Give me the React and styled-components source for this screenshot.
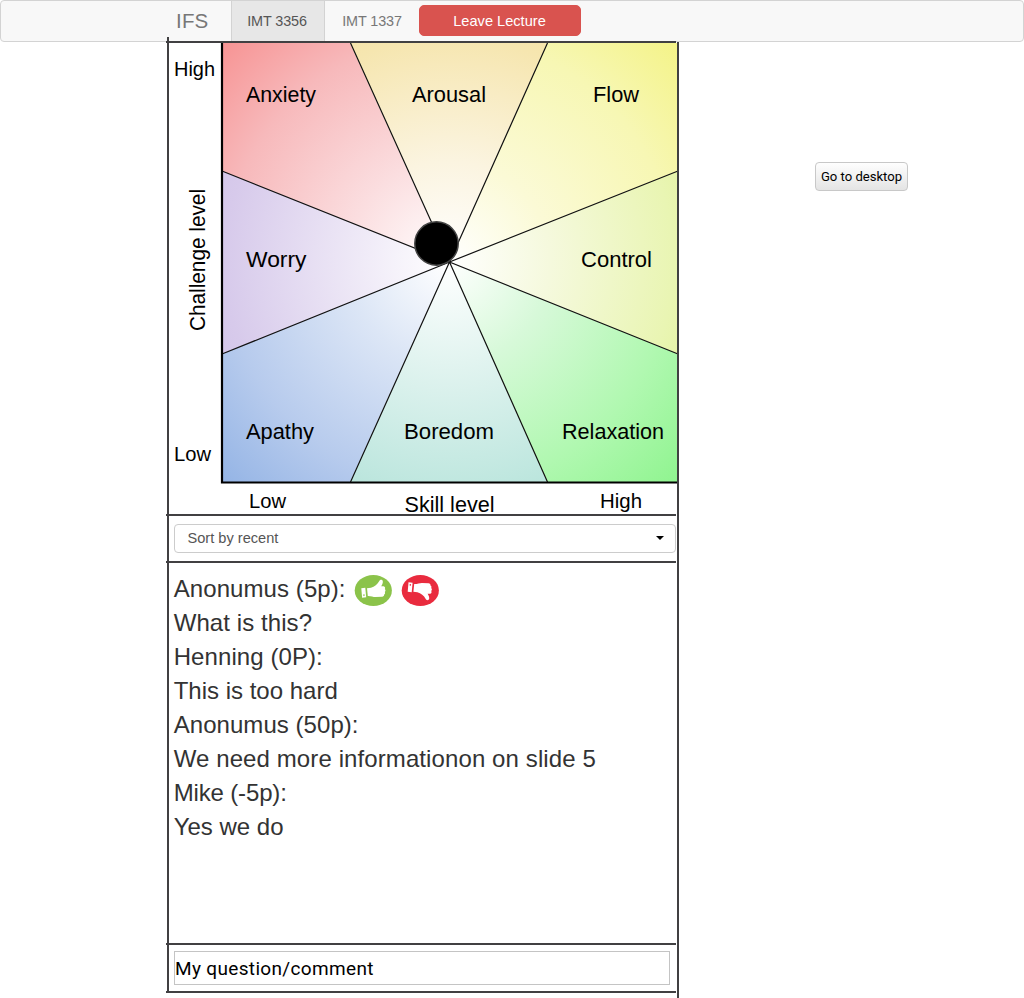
import React from "react";
import styled, { createGlobalStyle } from "styled-components";

const Global = createGlobalStyle`
  * { box-sizing: border-box; }
  body {
    margin: 0;
    background: #fff;
    color: #333;
    font-family: "Liberation Sans", Arial, sans-serif;
    overflow: hidden;
  }
`;

const ink = "#414042";

const Page = styled.div`
  height: 998px;
  overflow: hidden;
`;

const Navbar = styled.nav`
  display: flex;
  height: 42px;
  padding-left: 175px;
  background: #f8f8f8;
  border: 1px solid #d3d3d3;
  border-radius: 4px;
`;

const Brand = styled.a`
  width: 55px;
  font-size: 20.5px;
  line-height: 39px;
  letter-spacing: 0.2px;
  color: #777;
`;

const NavItem = styled.a`
  width: ${(p) => p.$width}px;
  padding-right: ${(p) => (p.$active ? 2 : 0)}px;
  text-align: center;
  font-size: 14.4px;
  line-height: 40px;
  letter-spacing: -0.1px;
  color: ${(p) => (p.$active ? "#555" : "#777")};
  background: ${(p) => (p.$active ? "#e7e7e7" : "transparent")};
  border: solid ${(p) => (p.$active ? "#d3d3d3" : "transparent")};
  border-width: 0 1px;
`;

const LeaveButton = styled.button`
  width: 162px;
  height: 31px;
  margin: 4px 0 0;
  padding: 0 1px 0 0;
  border: 1px solid #d9534f;
  border-radius: 5px;
  background: #d9534f;
  color: #fff;
  font: 14.6px "Liberation Sans", Arial, sans-serif;
`;

const Main = styled.main`
  display: flex;
  align-items: flex-start;
  margin-top: -1px;
`;

const Board = styled.div`
  position: relative;
  width: 513px;
  height: 957px;
  margin-left: 166px;
  &::before, &::after {
    content: "";
    position: absolute;
    width: 2px;
    background: ${ink};
  }
  &::before { left: 1px; top: -4px; height: 955px; }
  &::after { right: 0; top: 1px; bottom: 0; }
`;

const Section = styled.section`
  width: 510px;
  height: ${(p) => p.$height}px;
  padding: ${(p) => p.$padding || "0"};
  border-top: 2px solid ${ink};
`;

const Diagram = styled.svg`
  display: block;
  width: 509px;
  height: 471px;
  margin-left: 3px;
  overflow: visible;
  font-family: "Liberation Sans", Arial, sans-serif;
`;

const SortSelect = styled.div`
  display: flex;
  align-items: center;
  justify-content: space-between;
  width: 502px;
  height: 29px;
  padding: 0 11px 2px 12.5px;
  border: 1px solid #ccc;
  border-radius: 4px;
  font-size: 14.6px;
  color: #555;
`;

const Caret = styled.i`
  border: solid transparent;
  border-width: 4px 4px 0;
  border-top-color: #000;
`;

const Line = styled.div`
  display: flex;
  align-items: center;
  height: 34px;
  font-size: 24px;
  letter-spacing: ${(p) => p.$tracking ?? 0.08}px;
  white-space: nowrap;
`;

const Vote = styled.svg`
  width: 38px;
  height: 31px;
  margin-left: ${(p) => (p.$down ? 9 : 8.7)}px;
  margin-top: 2px;
`;

const Question = styled.input`
  display: block;
  width: 496px;
  height: 34px;
  padding: 0;
  border: 1px solid #c4c4c4;
  background: #fff;
  color: #000;
  font: 19px Roboto, sans-serif;
  letter-spacing: 0.34px;
  outline: none;
`;

const DesktopButton = styled.button`
  width: 93px;
  height: 29px;
  margin: 121px 0 0 136px;
  padding: 0;
  border: 1px solid #c8c8c8;
  border-radius: 4px;
  background: linear-gradient(#fefefe, #e4e4e4);
  color: #000;
  font: 13.1px Roboto, sans-serif;
  white-space: nowrap;
`;

const wedges = [
  { id: "anxiety", points: "449,262 350,43 222,43 222,171", stops: ["#fbdee0", "#f7b9bb", "#f79393"] },
  { id: "arousal", points: "449,262 350,43 547,43", stops: ["#fbf4e0", "#f6e6b0", "#f4df98"] },
  { id: "flow", points: "449,262 547,43 678,43 678,171", stops: ["#fbfad6", "#f7f7b4", "#f4f388"] },
  { id: "control", points: "449,262 678,171 678,354", stops: ["#f5f9dd", "#e9f5b3", "#def08c"] },
  { id: "relaxation", points: "449,262 678,354 678,482 547,482", stops: ["#d7f9d9", "#b0f8b0", "#90f490"] },
  { id: "boredom", points: "449,262 547,482 350,482", stops: ["#e2f4f0", "#bfe7df", "#a4dbd0"] },
  { id: "apathy", points: "449,262 350,482 222,482 222,354", stops: ["#dce6f6", "#b7cbed", "#94b4e5"] },
  { id: "worry", points: "449,262 222,354 222,171", stops: ["#ede7f6", "#d7caeb", "#cbbce6"] },
];

const labels = [
  ["Anxiety", 246, 101.5, 70, 22],
  ["Arousal", 412, 101.5, 74, 22],
  ["Flow", 593, 101.5, 46, 22],
  ["Worry", 246, 267, 60.5, 22],
  ["Control", 581, 267, 71, 22],
  ["Apathy", 246, 439, 68, 22],
  ["Boredom", 404, 439, 90, 22],
  ["Relaxation", 562, 439, 102, 22],
  ["Skill level", 404.5, 512, 90, 22],
  ["High", 174, 75.5, 41, 19.5],
  ["Low", 174, 461, 37, 19.5],
  ["Low", 249, 508, 37, 19.5],
  ["High", 600, 508, 42, 19.5],
];

function FlowDiagram() {
  return (
    <Diagram viewBox="169 43 509 471">
      <defs>
        {wedges.map((w) => (
          <radialGradient key={w.id} id={w.id} gradientUnits="userSpaceOnUse" cx="449" cy="262" r="316">
            <stop offset="0" stopColor="#fff" />
            <stop offset="0.32" stopColor={w.stops[0]} />
            <stop offset="0.71" stopColor={w.stops[1]} />
            <stop offset="1" stopColor={w.stops[2]} />
          </radialGradient>
        ))}
      </defs>
      {wedges.map((w) => (
        <polygon key={w.id} points={w.points} fill={`url(#${w.id})`} />
      ))}
      <path
        d="M350.5 43L449.5 262L350.5 482M547.5 43L449.5 262L547.5 482M222 171L449.5 262L222 354M678 171L449.5 262L678 354"
        fill="none" stroke="#111" strokeWidth="1.2"
      />
      <path d="M222 43V482.5H678" fill="none" stroke="#000" strokeWidth="2.2" />
      {labels.map(([text, x, y, width, size]) => (
        <text key={`${text}${x}`} x={x} y={y} fontSize={size} textLength={width} lengthAdjust="spacingAndGlyphs">{text}</text>
      ))}
      <text transform="translate(205 331) rotate(-90)" fontSize="22" textLength="142" lengthAdjust="spacingAndGlyphs">Challenge level</text>
      <circle cx="436.5" cy="243.5" r="21.7" fill="#000" stroke="#444" strokeWidth="1.5" />
    </Diagram>
  );
}

function Thumb({ down }) {
  return (
    <Vote viewBox="0 0 38 31" $down={down}>
      <ellipse cx="19.3" cy="15.5" rx="18.6" ry="15.4" fill={down ? "#e92b3e" : "#8bc34a"} />
      <g fill="#fff" transform={down ? "translate(-0.6 30) scale(1 -1)" : undefined}>
        <path d="M7.3 13.2L11.3 12.7L12.2 22.2L8.1 22.7ZM9.2 19.4L9.4 21L10.7 20.8L10.5 19.2Z" fillRule="evenodd" />
        <path d="M13 13.2L17 12.7C20.5 11.5 23.5 9.5 25.3 6C26 4.4 28.4 4.4 28.8 6.2C29 8 28.3 9.6 27.2 11.2H29.6C31.2 11.5 31.5 13 30.8 14C31.8 14.8 31.7 16.3 30.8 17C31.4 18 31 19.2 30.1 19.6C30.2 20.9 29.4 21.7 28.2 21.8L21.5 22C19 22 17 20.8 13.8 20.9Z" />
      </g>
    </Vote>
  );
}

const comments = [
  ["What is this?"],
  ["Henning (0P):"],
  ["This is too hard", 0],
  ["Anonumus (50p):", 0.05],
  ["We need more informationon on slide 5", 0.1],
  ["Mike (-5p):", -0.15],
  ["Yes we do", 0],
];

export default function App() {
  return (
    <Page>
      <Global />
      <Navbar>
        <Brand>IFS</Brand>
        <NavItem $active $width={94}>IMT 3356</NavItem>
        <NavItem $width={94}>IMT 1337</NavItem>
        <LeaveButton>Leave Lecture</LeaveButton>
      </Navbar>
      <Main>
        <Board>
          <Section $height={473}><FlowDiagram /></Section>
          <Section $height={47} $padding="8px 0 0 8px">
            <SortSelect>Sort by recent<Caret /></SortSelect>
          </Section>
          <Section $height={382} $padding="9px 0 0 7.7px">
            <Line>Anonumus (5p):<Thumb /><Thumb down /></Line>
            {comments.map(([text, tracking]) => <Line key={text} $tracking={tracking}>{text}</Line>)}
          </Section>
          <Section $height={48} $padding="6px 0 0 8px">
            <Question defaultValue="My question/comment" />
          </Section>
          <Section $height={2} />
        </Board>
        <DesktopButton>Go to desktop</DesktopButton>
      </Main>
    </Page>
  );
}
